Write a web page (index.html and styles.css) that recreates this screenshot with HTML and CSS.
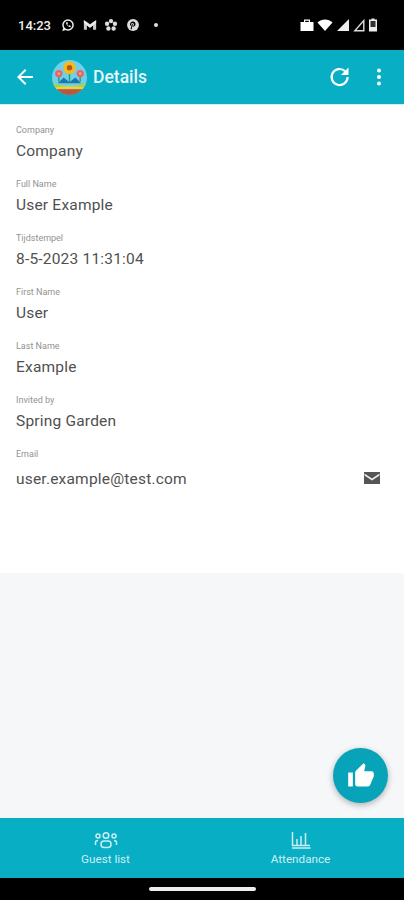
FILE: index.html
```html
<!DOCTYPE html>
<html lang="nl">
<head>
    <meta charset="UTF-8">
    <meta name="viewport" content="width=device-width, initial-scale=1.0">
    <title>Details</title>
    <link rel="stylesheet" href="styles.css">
</head>
<body>
    <div class="status-bar">
        <div class="status-left">
            <span class="clock">14:23</span>
            <svg class="status-icon" viewBox="0 0 16 16"><circle cx="8" cy="8" r="5.800" fill="none" stroke="#eee" stroke-width="1.700"/><path d="M1.500 15l1.300-4.500 3 3z" fill="#eee"/><path d="M5.600 5.200c.5 3 2 4.600 5 5.400l.8-1.600-1.800-.8-.8.8c-.8-.4-1.400-1-1.700-1.800l.8-.7-.7-1.900z" fill="#eee"/></svg>
            <svg class="status-icon" viewBox="0 0 16 16"><path d="M1 2.500l3.500 2L8 7l3.500-2.500 3.500-2v11h-3.500V8.500L8 11 4.500 8.500v5H1z" fill="#ccc"/><path d="M1 2.500L8 8l7-5.500v3L8 11 1 5.500z" fill="#eee"/></svg>
            <svg class="status-icon" viewBox="0 0 16 16"><g fill="#ddd"><circle cx="8" cy="3.500" r="2.500"/><circle cx="3.500" cy="6.500" r="2.500"/><circle cx="12.500" cy="6.500" r="2.500"/><circle cx="5" cy="12" r="2.500"/><circle cx="11" cy="12" r="2.500"/></g><circle cx="8" cy="8" r="1.200"/></svg>
            <svg class="status-icon" viewBox="0 0 16 16"><circle cx="8" cy="8" r="6.800" fill="#ddd"/><path d="M8 4a3 3 0 0 1 1 5.800c-.8.200-1.400-.100-1.800-.6L6.400 13 5.200 12.600 6.800 6.500l1.100.300-.600 2c.5.300 1.500.100 1.700-.9.200-1-.4-2.100-1.500-2.100-1.400 0-2.200 1.300-1.500 2.500l-1 .5C3.900 6.800 5.400 4 8 4z" fill="#000"/></svg>
            <span class="status-dot"></span>
        </div>
        <div class="status-right">
            <svg class="status-icon" viewBox="0 0 14 14"><path d="M0.500 4H4V1.500h6V4h3.500v9H0.500zM5.200 2.700V4h3.600V2.700z" fill="#fff"/></svg>
            <svg class="status-icon wifi" viewBox="0 0 16 14"><path d="M0.500 4.500C4.500 0.500 11.500 0.500 15.500 4.500L8 13z" fill="#fff"/></svg>
            <svg class="status-icon signal" viewBox="0 0 14 14"><path d="M13 1v12H1z" fill="#eee"/></svg>
            <svg class="status-icon signal-weak" viewBox="0 0 12 14"><path d="M10.800 2.500V12.800H1.800z" fill="none" stroke="#ddd" stroke-width="1.400"/></svg>
            <svg class="status-icon battery" viewBox="0 0 10 14"><path d="M3.500 0.500h3v1H9v12H1v-12h2.500z" fill="#eee"/><rect x="2.500" y="3" width="5" height="6" fill="#333"/></svg>
        </div>
    </div>

    <header class="app-bar">
        <svg class="back-icon" viewBox="0 0 24 24"><path d="M20 11H7.800l5.600-5.600L12 4l-8 8 8 8 1.400-1.400L7.800 13H20z" fill="#fff"/></svg>
        <svg class="logo" viewBox="0 0 36 36">
            <defs><clipPath id="logoClip"><circle cx="18" cy="18" r="18"/></clipPath></defs>
            <g clip-path="url(#logoClip)">
                <rect width="36" height="36" fill="#6fd0ea"/>
                <path d="M6 24l6-6 6 5 6-5 6 6z" fill="#1b77ad"/>
                <path d="M18 14v9M7 14v8M29 14v8" stroke="#2f9a6a" stroke-width="1.500"/>
                <path d="M0 24c6 1 12 3 18 3s12-2 18-3v7H0z" fill="#a8d04a"/>
                <path d="M4 28c9-1.500 19-1.500 28 0v3H4z" fill="#e8d24a"/>
                <rect y="30" width="36" height="6" fill="#b8593f"/>
                <circle cx="18" cy="8" r="6.500" fill="#f6ba1d"/>
                <circle cx="18" cy="8" r="2.800" fill="#b4571a"/>
                <circle cx="7" cy="14" r="3.800" fill="#ec5f7c"/>
                <circle cx="29" cy="14" r="3.800" fill="#ec5f7c"/>
                <circle cx="7" cy="14" r="1.300" fill="#f6ba1d"/>
                <circle cx="29" cy="14" r="1.300" fill="#f6ba1d"/>
            </g>
        </svg>
        <h1 class="app-title">Details</h1>
        <svg class="refresh-icon" viewBox="0 0 24 24"><path d="M19.600 12a8 8 0 1 1-2.400-5.700" fill="none" stroke="#fff" stroke-width="2.200"/><path d="M20.500 2.500v7.500H13z" fill="#fff"/></svg>
        <svg class="more-icon" viewBox="0 0 6 20"><circle cx="3" cy="3.500" r="2"/><circle cx="3" cy="10" r="2"/><circle cx="3" cy="16.500" r="2"/></svg>
    </header>

    <main class="details">
        <div class="field">
            <div class="field-label">Company</div>
            <div class="field-value">Company</div>
        </div>
        <div class="field">
            <div class="field-label">Full Name</div>
            <div class="field-value">User Example</div>
        </div>
        <div class="field">
            <div class="field-label">Tijdstempel</div>
            <div class="field-value">8-5-2023 11:31:04</div>
        </div>
        <div class="field">
            <div class="field-label">First Name</div>
            <div class="field-value">User</div>
        </div>
        <div class="field">
            <div class="field-label">Last Name</div>
            <div class="field-value">Example</div>
        </div>
        <div class="field">
            <div class="field-label">Invited by</div>
            <div class="field-value">Spring Garden</div>
        </div>
        <div class="field">
            <div class="field-label">Email</div>
            <div class="field-row">
                <div class="field-value">user.example@test.com</div>
                <svg class="mail-icon" viewBox="0 0 16 12"><path d="M0 0h16v12H0z" fill="#555"/><path d="M0.500 1.500L8 6.500l7.500-5v2L8 8.500 0.500 3.500z" fill="#eee"/></svg>
            </div>
        </div>
    </main>

    <div class="spacer">
        <button class="fab">
            <svg viewBox="0 0 24 24"><path d="M1 21h4V9H1zm22-11a2 2 0 0 0-2-2h-6.300l1-4.600v-.3c0-.4-.2-.8-.4-1.100L14.200 1 7.600 7.600C7.200 8 7 8.500 7 9v10a2 2 0 0 0 2 2h9c.8 0 1.500-.5 1.800-1.200l3-7.100c.1-.2.200-.5.200-.7z" fill="#fff"/></svg>
        </button>
    </div>

    <nav class="bottom-nav">
        <div class="nav-item">
            <svg class="nav-icon guests" viewBox="0 0 24 18"><g fill="none" stroke="#cdeef4" stroke-width="1.500"><circle cx="12" cy="4.500" r="2.800"/><circle cx="4" cy="5" r="2"/><circle cx="20" cy="5" r="2"/><rect x="7" y="10" width="10" height="6.500" rx="3"/><path d="M1.500 14v-2.500c0-1.200 1-2 2.500-2M22.500 14v-2.500c0-1.200-1-2-2.500-2"/></g></svg>
            <span class="nav-label">Guest list</span>
        </div>
        <div class="nav-item">
            <svg class="nav-icon chart" viewBox="0 0 20 18"><g fill="none" stroke="#cdeef4" stroke-width="1.500"><path d="M1.500 1v13.500H19M1 17h18.500"/><path d="M6 8v6M10 5v9M14.500 2v12"/></g></svg>
            <span class="nav-label">Attendance</span>
        </div>
    </nav>

    <div class="gesture-bar">
        <span class="gesture-pill"></span>
    </div>
</body>
</html>
```

FILE: styles.css
```css
html, body {
    margin: 0;
    height: 100%;
}
body {
    display: flex;
    flex-direction: column;
    height: 900px;
    overflow: hidden;
    background-color: #f6f7f9;
    font-family: Roboto, "Liberation Sans", sans-serif;
}
.status-bar {
    display: flex;
    justify-content: space-between;
    align-items: center;
    flex: 0 0 50px;
    box-sizing: border-box;
    padding: 0 26px 0 18px;
    background-color: #000;
    color: #eee;
}
.status-left, .status-right {
    display: flex;
    align-items: center;
}
.status-left {
    gap: 7.500px;
}
.clock {
    margin-right: 3px;
    font-size: 13px;
    font-weight: 500;
}
.status-icon {
    width: 14px;
    height: 14px;
}
.status-right {
    gap: 3px;
}
.status-icon.wifi {
    width: 16px;
}
.status-icon.signal-weak {
    width: 12px;
}
.status-icon.battery {
    width: 10px;
}
.status-dot {
    width: 4px;
    height: 4px;
    margin-left: 7px;
    border-radius: 50%;
    background-color: #ddd;
}
.app-bar {
    display: flex;
    align-items: center;
    flex: 0 0 55px;
    box-sizing: border-box;
    padding: 0 22px 0 13px;
    background-color: #07aec4;
    border-bottom: 1px solid #d5eef2;
}
.back-icon {
    width: 24px;
    height: 24px;
}
.logo {
    width: 35px;
    height: 35px;
    margin-left: 15px;
}
.app-title {
    flex: 1;
    margin: 0 0 0 6px;
    font-size: 17.500px;
    font-weight: 500;
    color: #e6f8fa;
}
.refresh-icon {
    width: 24px;
    height: 24px;
    margin-right: 24px;
}
.more-icon {
    width: 6px;
    height: 20px;
    fill: #fff;
}
.details {
    flex: 0 0 468px;
    box-sizing: border-box;
    padding: 19px 16px 0;
    background-color: #fff;
}
.field {
    height: 54px;
}
.field-label {
    font-size: 9px;
    line-height: 12px;
    color: #929292;
}
.field-value {
    margin-top: 3px;
    font-size: 15.500px;
    line-height: 24px;
    letter-spacing: 0.200px;
    color: #505050;
}
.field-row {
    display: flex;
    justify-content: space-between;
    align-items: center;
    padding-top: 7px;
    padding-right: 8px;
}
.field-row .field-value {
    margin-top: 0;
}
.mail-icon {
    width: 16px;
    height: 12px;
    margin-top: -2px;
}
.spacer {
    display: flex;
    justify-content: flex-end;
    align-items: flex-end;
    flex: 1;
    padding: 0 16px 15px 0;
}
.fab {
    display: flex;
    justify-content: center;
    align-items: center;
    width: 55px;
    height: 55px;
    padding: 0;
    border: none;
    border-radius: 50%;
    background-color: #07a3b9;
    box-shadow: 0 2px 6px rgba(0, 0, 0, 0.3);
}
.fab svg {
    width: 28px;
    height: 28px;
}
.bottom-nav {
    display: flex;
    flex: 0 0 60px;
    padding: 0 6px 0 8px;
    background-color: #07aec4;
}
.nav-item {
    display: flex;
    flex-direction: column;
    align-items: center;
    flex: 1;
    padding-top: 13px;
    box-sizing: border-box;
}
.nav-icon {
    height: 18px;
}
.nav-icon.guests {
    width: 24px;
}
.nav-icon.chart {
    width: 20px;
}
.nav-label {
    margin-top: 3px;
    font-size: 11.700px;
    color: #cdeef4;
}
.gesture-bar {
    display: flex;
    justify-content: center;
    align-items: center;
    flex: 0 0 22px;
    background-color: #000;
}
.gesture-pill {
    width: 107px;
    height: 4px;
    border-radius: 2px;
    background-color: #eee;
}
```
